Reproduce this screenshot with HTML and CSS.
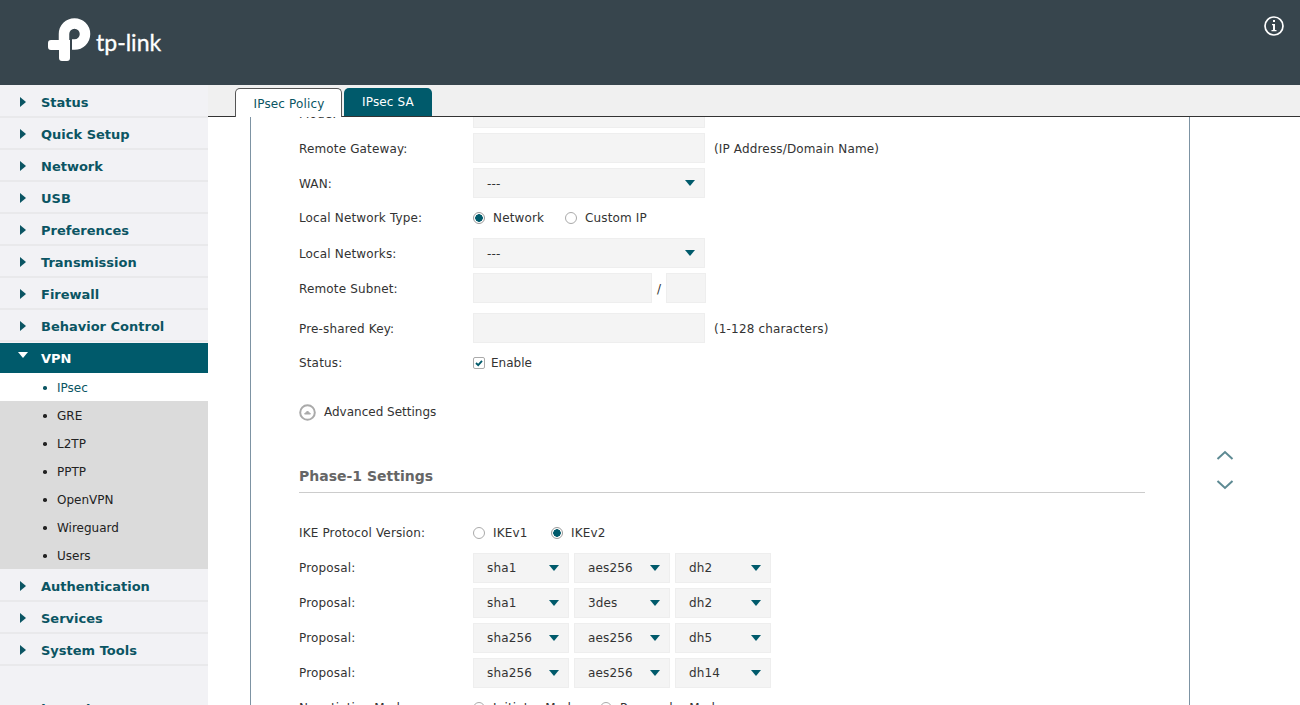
FILE: index.html
```html
<!DOCTYPE html>
<html lang="en">
<head>
  <meta charset="UTF-8" />
  <title>IPsec - TP-Link</title>
  <link rel="stylesheet" href="styles.css">
</head>
<body>

<div id="app">
  <div id="top-bar">
    <div class="logo">
      <svg class="logo-mark" width="46" height="46" viewBox="46 17 46 46">
        <path d="M64 41V34A10.500 10.500 0 1 1 74.500 44.500H72" fill="none" stroke="#fff" stroke-width="10.500"/>
        <path d="M51 40H70V58A3 3 0 0 1 67 61H62A3 3 0 0 1 59 58V50H51A3 3 0 0 1 48 47V43A3 3 0 0 1 51 40Z" fill="#fff"/>
      </svg>
      <span class="logo-text">tp-link</span>
    </div>
    <svg class="info-icon" width="22" height="22" viewBox="0 0 22 22">
      <circle cx="11" cy="11" r="9" fill="none" stroke="#fff" stroke-width="1.700"/>
      <rect x="10" y="5" width="2" height="2" fill="#fff"/>
      <path d="M9 9H12V15H13.500V16.200H8.500V15H10V10.200H9Z" fill="#fff"/>
    </svg>
  </div>

  <div id="page-body">
    <div id="side-menu">
      <div class="menu-item"><span class="arrow"></span>Status</div>
      <div class="menu-item"><span class="arrow"></span>Quick Setup</div>
      <div class="menu-item"><span class="arrow"></span>Network</div>
      <div class="menu-item"><span class="arrow"></span>USB</div>
      <div class="menu-item"><span class="arrow"></span>Preferences</div>
      <div class="menu-item"><span class="arrow"></span>Transmission</div>
      <div class="menu-item"><span class="arrow"></span>Firewall</div>
      <div class="menu-item"><span class="arrow"></span>Behavior Control</div>
      <div class="menu-item open"><span class="arrow"></span>VPN</div>
      <div class="sub-menu">
        <div class="sub-item current">IPsec</div>
        <div class="sub-item">GRE</div>
        <div class="sub-item">L2TP</div>
        <div class="sub-item">PPTP</div>
        <div class="sub-item">OpenVPN</div>
        <div class="sub-item">Wireguard</div>
        <div class="sub-item">Users</div>
      </div>
      <div class="menu-item"><span class="arrow"></span>Authentication</div>
      <div class="menu-item"><span class="arrow"></span>Services</div>
      <div class="menu-item"><span class="arrow"></span>System Tools</div>
      <div class="logout">Logout</div>
    </div>

    <div id="main">
      <div id="tab-strip">
        <div class="tab active">IPsec Policy</div>
        <div class="tab">IPsec SA</div>
      </div>

      <div id="scroll-area">
        <div id="panel">
          <div id="panel-inner">
            <div class="row low"><label>Mode:</label><div class="field"></div></div>
            <div class="row low"><label>Remote Gateway:</label><div class="field"></div><span class="hint">(IP Address/Domain Name)</span></div>
            <div class="row low"><label>WAN:</label><div class="select wide">---</div></div>
            <div class="row">
              <label>Local Network Type:</label>
              <span class="radio on"></span><span class="opt net">Network</span>
              <span class="radio"></span><span class="opt">Custom IP</span>
            </div>
            <div class="row low"><label>Local Networks:</label><div class="select wide">---</div></div>
            <div class="row low gap"><label>Remote Subnet:</label><div class="field subnet"></div><span class="slash">/</span><div class="field mask"></div></div>
            <div class="row low"><label>Pre-shared Key:</label><div class="field"></div><span class="hint">(1-128 characters)</span></div>
            <div class="row">
              <label>Status:</label>
              <span class="check"><svg width="10" height="10" viewBox="0 0 10 10"><path d="M2 5L4.200 7.200L8 2.800" fill="none" stroke="#005a6b" stroke-width="1.800"/></svg></span>
              <span class="opt enable">Enable</span>
            </div>

            <div class="advanced">
              <svg width="17" height="17" viewBox="0 0 17 17">
                <circle cx="8.500" cy="8.500" r="7.300" fill="#fff" stroke="#aaa" stroke-width="2"/>
                <path d="M5.500 10L8.500 7L11.500 10Z" fill="#aaa" stroke="#aaa"/>
              </svg>
              <span>Advanced Settings</span>
            </div>

            <div class="section-title">Phase-1 Settings</div>

            <div class="row">
              <label>IKE Protocol Version:</label>
              <span class="radio"></span><span class="opt ike">IKEv1</span>
              <span class="radio on"></span><span class="opt">IKEv2</span>
            </div>
            <div class="row"><label>Proposal:</label><div class="select">sha1</div><div class="select">aes256</div><div class="select">dh2</div></div>
            <div class="row"><label>Proposal:</label><div class="select">sha1</div><div class="select">3des</div><div class="select">dh2</div></div>
            <div class="row"><label>Proposal:</label><div class="select">sha256</div><div class="select">aes256</div><div class="select">dh5</div></div>
            <div class="row"><label>Proposal:</label><div class="select">sha256</div><div class="select">aes256</div><div class="select">dh14</div></div>
            <div class="row">
              <label>Negotiation Mode:</label>
              <span class="radio"></span><span class="opt mode">Initiator Mode</span>
              <span class="radio"></span><span class="opt">Responder Mode</span>
            </div>
          </div>
        </div>

        <div id="page-arrows">
          <svg width="18" height="10" viewBox="0 0 18 10"><path d="M1.500 9L9 2L16.500 9" fill="none" stroke="#5d8a93" stroke-width="2"/></svg>
          <svg width="18" height="10" viewBox="0 0 18 10"><path d="M1.500 1L9 8L16.500 1" fill="none" stroke="#5d8a93" stroke-width="2"/></svg>
        </div>
      </div>
    </div>
  </div>
</div>

</body>
</html>
```

FILE: styles.css
```css
html, body {
  margin: 0;
  height: 100%;
  overflow: hidden;
}

body {
  background: #fff;
  color: #333;
  font-family: "DejaVu Sans", Verdana, sans-serif;
  font-size: 12px;
}

#app {
  display: flex;
  flex-direction: column;
  height: 705px;
}

#top-bar {
  display: flex;
  justify-content: space-between;
  height: 85px;
  flex: none;
  background: #37454d;
}

.logo {
  display: flex;
  align-items: flex-start;
  margin-left: 46px;
  padding-top: 17px;
}

.logo-text {
  margin: 10px 0 0 4px;
  color: #fff;
  font-family: Lato, sans-serif;
  font-size: 23px;
  line-height: 30px;
  -webkit-text-stroke: 0.3px #fff;
}

.info-icon {
  margin: 15px 15px 0 0;
}

#page-body {
  display: flex;
  flex: 1;
  min-height: 0;
}

#side-menu {
  width: 208px;
  flex: none;
  padding-top: 1px;
  background: #f2f2f5;
  overflow: hidden;
}

.menu-item {
  display: flex;
  align-items: center;
  box-sizing: border-box;
  height: 32px;
  padding: 3px 0 0 41px;
  border-bottom: 2px solid #e9e9eb;
  color: #0b5563;
  font-size: 13px;
  font-weight: bold;
  position: relative;
}

.arrow {
  position: absolute;
  left: 20px;
  top: 11px;
  border-left: 6px solid #0b5563;
  border-top: 5px solid transparent;
  border-bottom: 5px solid transparent;
}

.menu-item.open {
  height: 30px;
  margin-top: 1px;
  padding-top: 0;
  border-bottom: 0;
  background: #005a6b;
  color: #fff;
}

.menu-item.open .arrow {
  left: 18px;
  top: 9px;
  border-top: 6px solid #fff;
  border-bottom: 0;
  border-left: 5px solid transparent;
  border-right: 5px solid transparent;
}

.sub-menu {
  margin-bottom: 1px;
  background: #dbdbdb;
}

.sub-item {
  height: 28px;
  padding-left: 57px;
  line-height: 30px;
  color: #222;
  position: relative;
}

.sub-item::before {
  content: "";
  position: absolute;
  left: 43px;
  top: 13px;
  width: 3.500px;
  height: 3.500px;
  border-radius: 50%;
  background: #222;
}

.sub-item.current {
  background: #fff;
  color: #0b5563;
}

.sub-item.current::before {
  background: #0b5563;
}

.logout {
  margin-top: 35px;
  padding-left: 41px;
  color: #0b5563;
  font-size: 13px;
  font-weight: bold;
}

#main {
  display: flex;
  flex-direction: column;
  flex: 1;
  min-width: 0;
  letter-spacing: 0.15px;
}

#tab-strip {
  display: flex;
  align-items: flex-end;
  gap: 2px;
  box-sizing: border-box;
  height: 32px;
  flex: none;
  padding-left: 27px;
  background: #f0f0f0;
  border-bottom: 1px solid #333;
}

.tab {
  box-sizing: border-box;
  width: 88px;
  height: 28px;
  border-radius: 5px 5px 0 0;
  background: #005a6b;
  color: #fff;
  line-height: 29px;
  text-align: center;
}

.tab.active {
  width: 107px;
  height: 29px;
  margin-bottom: -1px;
  padding-left: 1px;
  border: 1px solid #555;
  border-bottom: 0;
  background: #fff;
  color: #0b5563;
  line-height: 30px;
}

#scroll-area {
  display: flex;
  flex: 1;
  min-height: 0;
  overflow: hidden;
}

#panel {
  box-sizing: border-box;
  width: 940px;
  margin-left: 42px;
  padding-left: 48px;
  border-left: 1px solid #7d93a3;
  border-right: 1px solid #7d93a3;
  flex: none;
}

#panel-inner {
  margin-top: -19px;
}

.row {
  display: flex;
  align-items: center;
  height: 30px;
  margin-bottom: 5px;
}

.row.gap {
  margin-bottom: 10px;
}

.row label {
  width: 174px;
  flex: none;
}

.row.low label, .row.low .hint, .row.low .slash {
  padding-top: 2px;
}

.row.low .select {
  line-height: 30px;
}

.field, .select {
  box-sizing: border-box;
  height: 30px;
  background: #f4f4f4;
  border: 1px solid #eee;
}

.field {
  width: 232px;
}

.field.subnet {
  width: 179px;
}

.field.mask {
  width: 40px;
}

.slash {
  width: 14px;
  text-align: center;
}

.hint {
  margin-left: 9px;
}

.select {
  position: relative;
  width: 96px;
  margin-right: 5px;
  padding-left: 13px;
  line-height: 28px;
}

.select.wide {
  width: 232px;
  margin-right: 0;
}

.select::after {
  content: "";
  position: absolute;
  right: 9px;
  top: 11px;
  border-top: 6px solid #005a6b;
  border-left: 5.500px solid transparent;
  border-right: 5.500px solid transparent;
}

.radio {
  box-sizing: border-box;
  width: 12px;
  height: 12px;
  flex: none;
  border: 1px solid #aaa;
  border-radius: 50%;
  background: #fff;
}

.radio.on {
  border-color: #999;
  background: radial-gradient(circle, #005a6b 0 3.500px, #fff 4px);
}

.opt {
  margin-left: 8px;
}

.opt.net {
  width: 72px;
}

.opt.ike {
  width: 58px;
}

.opt.mode {
  width: 107px;
}

.opt.enable {
  letter-spacing: 0;
}

.check {
  display: flex;
  align-items: center;
  justify-content: center;
  box-sizing: border-box;
  width: 12px;
  height: 12px;
  margin-right: -2px;
  border: 1px solid #aaa;
  border-radius: 2px;
}

.advanced {
  display: flex;
  align-items: center;
  gap: 8px;
  height: 30px;
  margin-top: 13px;
  padding-top: 6px;
  letter-spacing: 0;
}

.section-title {
  box-sizing: border-box;
  width: 846px;
  height: 31px;
  margin: 35px 0 25px;
  border-bottom: 1px solid #ccc;
  color: #666;
  font-size: 14px;
  font-weight: bold;
  letter-spacing: 0;
  line-height: 29px;
}

#page-arrows {
  display: flex;
  flex-direction: column;
  gap: 20px;
  margin: 333px 0 0 26px;
}
```
